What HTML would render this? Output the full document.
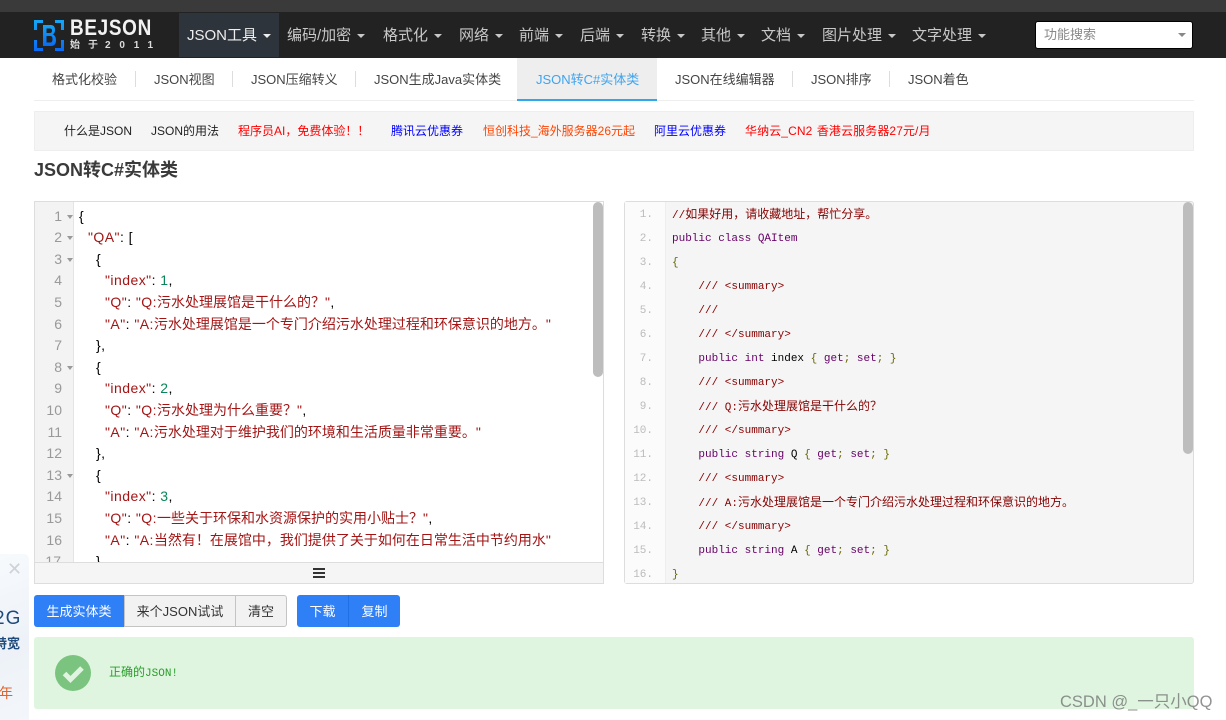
<!DOCTYPE html>
<html lang="zh"><head><meta charset="utf-8"><title>JSON转C#实体类</title>
<style>
*{box-sizing:border-box}
html,body{margin:0;padding:0;width:1226px;height:720px;overflow:hidden;background:#fff}
body{position:relative;font-family:"Liberation Sans","Noto Sans CJK SC",sans-serif;color:#333}
.a{position:absolute;white-space:nowrap}
.nav{font-size:15px;color:#c8c8c8;top:26px;line-height:20px}
.nav i{display:inline-block;width:0;height:0;border-left:4px solid transparent;border-right:4px solid transparent;border-top:4px solid #c8c8c8;vertical-align:middle;margin-left:6px}
.tab{font-size:13px;color:#444;top:70px;line-height:20px}
.sep{position:absolute;top:71px;width:1px;height:16px;background:#ddd}
.lk{font-size:12px;top:122.500px;line-height:17px}
.ln{position:absolute;left:35px;width:27px;text-align:right;font-size:14px;color:#999;height:21.6px;line-height:21.6px}
.fd{position:absolute;left:67px;width:0;height:0;border-left:3px solid transparent;border-right:3px solid transparent;border-top:4px solid #999}
.cl{position:absolute;left:79px;font-size:14px;line-height:21.6px;height:21.6px;white-space:pre;color:#000;letter-spacing:.45px}
.s{color:#a31515}.n{color:#098658}
.cl .z{letter-spacing:0}
.rn{position:absolute;left:625px;width:28px;text-align:right;font:11px/24px "Liberation Mono",monospace;color:#bbb}
.rl{position:absolute;left:672px;font:11px/24px "Liberation Mono","Noto Sans CJK SC",monospace;white-space:pre;color:#333}
.rl .z{font-size:12px}
.k{color:#606}.c{color:#800}.p{color:#660}.b{color:#000}
.btn{position:absolute;top:595px;height:32px;font-size:13px;line-height:33px;text-align:center}
</style></head><body>
<div class="a" style="left:0;top:0;width:1226px;height:12px;background:#3a3a3a"></div>
<div class="a" style="left:0;top:12px;width:1226px;height:46px;background:#222"></div>
<div class="a" style="left:179px;top:13px;width:100px;height:44px;background:#2d343b"></div>

<svg class="a" style="left:34px;top:20px" width="30" height="31" viewBox="0 0 30 31">
<defs><linearGradient id="g" x1="0" y1="0" x2="0" y2="1"><stop offset="0" stop-color="#14a4f5"/><stop offset="1" stop-color="#0a6cf5"/></linearGradient></defs>
<path d="M9 1.500H1.500V10M21 1.500H28.500V10M1.500 20V29.500H9M28.500 20V29.500H21" fill="none" stroke="url(#g)" stroke-width="3"/>
<path fill-rule="evenodd" fill="url(#g)" d="M9 5H17Q21 5 21 10Q21 13 19 14.500Q22 16 22 20Q22 26 17 26H9ZM12.500 8.500V13H16Q18 13 18 10.800Q18 8.500 16 8.500ZM12.500 16V22.500H16.500Q18.500 22.500 18.500 19.200Q18.500 16 16.500 16Z"/>
</svg>
<div class="a" style="left:70px;top:16px;font-size:22px;line-height:24px;font-weight:700;color:#f2f2f2;transform:scaleX(.86);transform-origin:0 0;letter-spacing:.8px">BEJSON</div>
<div class="a" style="left:70px;top:40px;font-size:10px;line-height:12px;font-weight:700;color:#ddd"><span style="display:inline-block;width:18px">始</span><span style="display:inline-block;width:17px">于</span><span style="letter-spacing:8.800px">2011</span></div>

<div class="a nav" style="left:187px;color:#eee">JSON工具<i style="border-top-color:#eee"></i></div>
<div class="a nav" style="left:287px">编码/加密<i></i></div>
<div class="a nav" style="left:383px">格式化<i></i></div>
<div class="a nav" style="left:459px">网络<i></i></div>
<div class="a nav" style="left:519px">前端<i></i></div>
<div class="a nav" style="left:580px">后端<i></i></div>
<div class="a nav" style="left:641px">转换<i></i></div>
<div class="a nav" style="left:701px">其他<i></i></div>
<div class="a nav" style="left:761px">文档<i></i></div>
<div class="a nav" style="left:822px">图片处理<i></i></div>
<div class="a nav" style="left:912px">文字处理<i></i></div>

<div class="a" style="left:1035px;top:21px;width:158px;height:28px;background:#fff;border:1px solid #000;border-radius:3px;font-size:13px;line-height:26px;color:#888;padding-left:8px">功能搜索</div>
<div class="a" style="left:1178px;top:33px;width:0;height:0;border-left:4px solid transparent;border-right:4px solid transparent;border-top:4px solid #888"></div>

<div class="a" style="left:34px;top:100px;width:1160px;height:1px;background:#eee"></div>
<div class="a" style="left:517px;top:58px;width:140px;height:41px;background:#eee"></div>
<div class="a" style="left:517px;top:99px;width:140px;height:2px;background:#2ea7ee"></div>
<div class="a tab" style="left:52px">格式化校验</div>
<div class="sep" style="left:135px"></div>
<div class="a tab" style="left:154px">JSON视图</div>
<div class="sep" style="left:232px"></div>
<div class="a tab" style="left:251px">JSON压缩转义</div>
<div class="sep" style="left:355px"></div>
<div class="a tab" style="left:374px">JSON生成Java实体类</div>
<div class="a tab" style="left:536px;color:#3fa4ee">JSON转C#实体类</div>
<div class="a tab" style="left:675px">JSON在线编辑器</div>
<div class="sep" style="left:792px"></div>
<div class="a tab" style="left:811px">JSON排序</div>
<div class="sep" style="left:889px"></div>
<div class="a tab" style="left:908px">JSON着色</div>

<div class="a" style="left:34px;top:111px;width:1160px;height:40px;background:#f5f5f5;border:1px solid #eee"></div>
<div class="a lk" style="left:64px;color:#222">什么是JSON</div>
<div class="a lk" style="left:151px;color:#222">JSON的用法</div>
<div class="a lk" style="left:238px;color:#f00">程序员AI，免费体验！！</div>
<div class="a lk" style="left:391px;color:#00f">腾讯云优惠券</div>
<div class="a lk" style="left:483px;color:#f40">恒创科技_海外服务器26元起</div>
<div class="a lk" style="left:654px;color:#00f">阿里云优惠券</div>
<div class="a lk" style="left:745px;color:#f00;word-spacing:1px;letter-spacing:.1px">华纳云_CN2 香港云服务器27元/月</div>

<div class="a" style="left:34px;top:159px;font-size:18px;line-height:22px;font-weight:700;color:#3a3a3a">JSON转C#实体类</div>

<!-- left editor -->
<div class="a" style="left:34px;top:201px;width:570px;height:383px;border:1px solid #ddd;background:#fff;overflow:hidden"></div>
<div class="a" style="left:35px;top:202px;width:39px;height:360px;background:#f3f3f3;border-right:1px solid #e4e4e4"></div>
<div class="ln" style="top:205.500px">1</div><div class="fd" style="top:215px"></div>
<div class="ln" style="top:227.100px">2</div><div class="fd" style="top:236px"></div>
<div class="ln" style="top:248.700px">3</div><div class="fd" style="top:258px"></div>
<div class="ln" style="top:270.300px">4</div>
<div class="ln" style="top:291.900px">5</div>
<div class="ln" style="top:313.500px">6</div>
<div class="ln" style="top:335.100px">7</div>
<div class="ln" style="top:356.700px">8</div><div class="fd" style="top:366px"></div>
<div class="ln" style="top:378.300px">9</div>
<div class="ln" style="top:399.900px">10</div>
<div class="ln" style="top:421.500px">11</div>
<div class="ln" style="top:443.100px">12</div>
<div class="ln" style="top:464.700px">13</div><div class="fd" style="top:474px"></div>
<div class="ln" style="top:486.300px">14</div>
<div class="ln" style="top:507.900px">15</div>
<div class="ln" style="top:529.500px">16</div>
<div class="cl" style="top:205.500px">{</div>
<div class="cl" style="top:227.100px;left:88px"><span class="s">"QA"</span>: [</div>
<div class="cl" style="top:248.700px;left:96px">{</div>
<div class="cl" style="top:270.300px;left:105px"><span class="s">"index"</span>: <span class="n">1</span>,</div>
<div class="cl" style="top:291.900px;left:105px"><span class="s">"Q"</span>: <span class="s">"Q:<span class="z">污水处理展馆是干什么的？</span>"</span>,</div>
<div class="cl" style="top:313.500px;left:105px"><span class="s">"A"</span>: <span class="s">"A:<span class="z">污水处理展馆是一个专门介绍污水处理过程和环保意识的地方。</span>"</span></div>
<div class="cl" style="top:335.100px;left:96px">},</div>
<div class="cl" style="top:356.700px;left:96px">{</div>
<div class="cl" style="top:378.300px;left:105px"><span class="s">"index"</span>: <span class="n">2</span>,</div>
<div class="cl" style="top:399.900px;left:105px"><span class="s">"Q"</span>: <span class="s">"Q:<span class="z">污水处理为什么重要？</span>"</span>,</div>
<div class="cl" style="top:421.500px;left:105px"><span class="s">"A"</span>: <span class="s">"A:<span class="z">污水处理对于维护我们的环境和生活质量非常重要。</span>"</span></div>
<div class="cl" style="top:443.100px;left:96px">},</div>
<div class="cl" style="top:464.700px;left:96px">{</div>
<div class="cl" style="top:486.300px;left:105px"><span class="s">"index"</span>: <span class="n">3</span>,</div>
<div class="cl" style="top:507.900px;left:105px"><span class="s">"Q"</span>: <span class="s">"Q:<span class="z">一些关于环保和水资源保护的实用小贴士？</span>"</span>,</div>
<div class="cl" style="top:529.500px;left:105px"><span class="s">"A"</span>: <span class="s">"A:<span class="z">当然有！在展馆中，我们提供了关于如何在日常生活中节约用水</span>"</span></div>
<div class="a" style="left:35px;top:551px;width:39px;height:11px;overflow:hidden;background:#f3f3f3;border-right:1px solid #e4e4e4;font-size:14px;line-height:21.6px;color:#999;text-align:right;padding-right:12px">17</div>
<div class="a" style="left:96px;top:551px;height:11px;overflow:hidden;font-size:14px;line-height:21.600px;color:#000">}</div>
<div class="a" style="left:593px;top:202px;width:10px;height:175px;background:#bdbdbd;border-radius:5px"></div>
<div class="a" style="left:35px;top:562px;width:568px;height:21px;background:#f5f5f5;border-top:1px solid #ddd"></div>
<div class="a" style="left:313px;top:568px;width:12px;height:2px;background:#333"></div>
<div class="a" style="left:313px;top:572px;width:12px;height:2px;background:#333"></div>
<div class="a" style="left:313px;top:576px;width:12px;height:2px;background:#333"></div>

<!-- right code -->
<div class="a" style="left:624px;top:201px;width:570px;height:383px;border:1px solid #ddd;border-radius:3px;background:#f5f5f5"></div>
<div class="a" style="left:625px;top:202px;width:41px;height:381px;background:#fbfbfb;border-right:1px solid #eee"></div>
<div class="rn" style="top:203px">1.</div><div class="rn" style="top:227px">2.</div><div class="rn" style="top:251px">3.</div><div class="rn" style="top:275px">4.</div><div class="rn" style="top:299px">5.</div><div class="rn" style="top:323px">6.</div><div class="rn" style="top:347px">7.</div><div class="rn" style="top:371px">8.</div><div class="rn" style="top:395px">9.</div><div class="rn" style="top:419px">10.</div><div class="rn" style="top:443px">11.</div><div class="rn" style="top:467px">12.</div><div class="rn" style="top:491px">13.</div><div class="rn" style="top:515px">14.</div><div class="rn" style="top:539px">15.</div><div class="rn" style="top:563px">16.</div>
<div class="rl c" style="top:203px">//<span class="z">如果好用，请收藏地址，帮忙分享。</span></div>
<div class="rl" style="top:227px"><span class="k">public class QAItem</span></div>
<div class="rl p" style="top:251px">{</div>
<div class="rl c" style="top:275px">    /// &lt;summary&gt;</div>
<div class="rl c" style="top:299px">    ///</div>
<div class="rl c" style="top:323px">    /// &lt;/summary&gt;</div>
<div class="rl" style="top:347px">    <span class="k">public int</span> <span class="b">index</span> <span class="p">{</span> <span class="k">get</span><span class="p">;</span> <span class="k">set</span><span class="p">; }</span></div>
<div class="rl c" style="top:371px">    /// &lt;summary&gt;</div>
<div class="rl c" style="top:395px">    /// Q:<span class="z">污水处理展馆是干什么的？</span></div>
<div class="rl c" style="top:419px">    /// &lt;/summary&gt;</div>
<div class="rl" style="top:443px">    <span class="k">public string</span> <span class="b">Q</span> <span class="p">{</span> <span class="k">get</span><span class="p">;</span> <span class="k">set</span><span class="p">; }</span></div>
<div class="rl c" style="top:467px">    /// &lt;summary&gt;</div>
<div class="rl c" style="top:491px">    /// A:<span class="z">污水处理展馆是一个专门介绍污水处理过程和环保意识的地方。</span></div>
<div class="rl c" style="top:515px">    /// &lt;/summary&gt;</div>
<div class="rl" style="top:539px">    <span class="k">public string</span> <span class="b">A</span> <span class="p">{</span> <span class="k">get</span><span class="p">;</span> <span class="k">set</span><span class="p">; }</span></div>
<div class="rl p" style="top:563px">}</div>
<div class="a" style="left:1183px;top:202px;width:10px;height:252px;background:#bdbdbd;border-radius:5px"></div>

<!-- buttons -->
<div class="btn" style="left:34px;width:90px;background:#2f7ff7;color:#fff;border-radius:3px 0 0 3px">生成实体类</div>
<div class="btn" style="left:124px;width:112px;background:#f2f2f2;border:1px solid #c4c4c4;color:#333;line-height:31px">来个JSON试试</div>
<div class="btn" style="left:235px;width:52px;background:#f2f2f2;border:1px solid #c4c4c4;color:#333;border-radius:0 3px 3px 0;line-height:31px">清空</div>
<div class="btn" style="left:297px;width:52px;background:#2f7ff7;color:#fff;border-radius:3px 0 0 3px;border-right:1px solid #1f6fe8">下载</div>
<div class="btn" style="left:349px;width:51px;background:#2f7ff7;color:#fff;border-radius:0 3px 3px 0">复制</div>

<!-- alert -->
<div class="a" style="left:34px;top:637px;width:1160px;height:72px;background:#dff5e0;border-radius:3px"></div>
<svg class="a" style="left:55px;top:655px" width="36" height="36" viewBox="0 0 36 36"><circle cx="18" cy="18" r="18" fill="#7bc47f"/><path d="M9.500 18.500L15.500 24.500L27 13" fill="none" stroke="#dff5e0" stroke-width="5"/></svg>
<div class="a" style="left:109px;top:665px;font:11px/17px 'Liberation Mono','Noto Sans CJK SC',monospace;color:#2a9d2a"><span style="font-size:12px">正确的</span>JSON!</div>

<!-- left ad -->
<div class="a" style="left:0;top:554px;width:29px;height:166px;background:linear-gradient(160deg,#f7fafd,#edf2f8 55%,#f3f6fa);border-radius:0 5px 0 0;overflow:hidden">
<div class="a" style="left:7px;top:5px;font-size:18px;line-height:20px;color:#cfd3d8">✕</div>
<div class="a" style="left:-6px;top:53px;font-size:19px;line-height:24px;color:#1f4a7c;letter-spacing:1px">2G</div>
<div class="a" style="left:-6px;top:81px;font-size:13px;line-height:18px;font-weight:700;color:#1f4a7c">特宽</div>
<div class="a" style="left:-1px;top:130px;font-size:14px;line-height:18px;color:#e2622a">年</div>
</div>

<div class="a" style="left:1060px;top:692px;font-size:16.500px;line-height:20px;color:rgba(110,110,110,.75)">CSDN @_一只小QQ</div>
</body></html>
